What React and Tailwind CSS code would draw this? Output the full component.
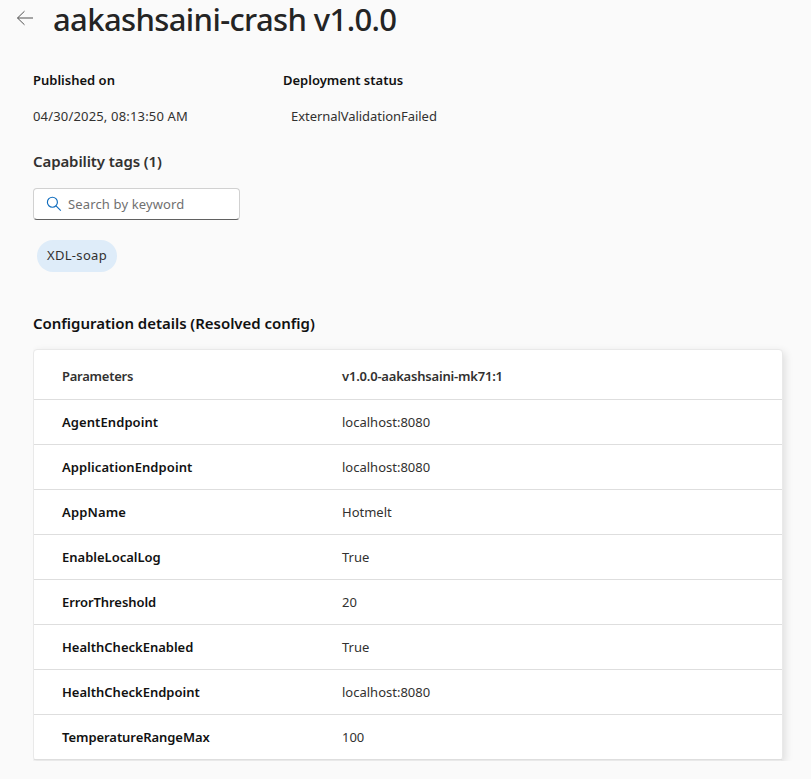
const rows = [
  ["AgentEndpoint", "localhost:8080", "tracking-[0.08px]"],
  ["ApplicationEndpoint", "localhost:8080", "tracking-[0.08px]"],
  ["AppName", "Hotmelt", "tracking-[0.15px]"],
  ["EnableLocalLog", "True", "tracking-normal"],
  ["ErrorThreshold", "20", "tracking-[-0.08px]"],
  ["HealthCheckEnabled", "True", "tracking-normal"],
  ["HealthCheckEndpoint", "localhost:8080", "tracking-normal"],
  ["TemperatureRangeMax", "100", "tracking-[-0.06px]"],
];

function BackArrow() {
  return (
    <svg width="18" height="16" viewBox="0 0 18 16" fill="none" stroke="#505050" strokeWidth="1">
      <path d="M8.5 1.2 L1.5 8 L8.5 14.8 M1.5 8 H17" />
    </svg>
  );
}

function SearchIcon() {
  return (
    <svg width="16" height="16" viewBox="0 0 16 16" fill="none" stroke="#0f6cbd" strokeWidth="1.15">
      <circle cx="6.4" cy="6.2" r="5" />
      <path d="M10 9.9 L14.8 14.7" />
    </svg>
  );
}

export default function App() {
  return (
    <main className="h-[779px] w-[811px] bg-[#fafafa] font-['Noto_Sans','Open_Sans',sans-serif] text-[13px] leading-5 text-[#323130]">
      <header className="flex h-10 items-start pl-4">
        <button className="mt-[10px] w-[37px]" aria-label="Back">
          <BackArrow />
        </button>
        <h1 className="text-[31px] leading-[38px] font-medium tracking-[-0.62px] whitespace-nowrap text-[#242424]">
          aakashsaini-crash v1.0.0
        </h1>
      </header>

      <section className="flex pt-[30px] pl-[33px]">
        <div className="w-[250px]">
          <h2 className="font-semibold text-[#111]">Published on</h2>
          <p className="mt-4 tracking-[0.17px]">04/30/2025, 08:13:50 AM</p>
        </div>
        <div>
          <h2 className="font-semibold text-[#111]">Deployment status</h2>
          <p className="mt-4 pl-2 tracking-[-0.05px]">ExternalValidationFailed</p>
        </div>
      </section>

      <section className="pt-[25px] pl-[33px]">
        <h2 className="text-[15px] leading-5 font-semibold tracking-[-0.1px]">Capability tags (1)</h2>
        <label className="mt-[17px] flex h-8 w-[207px] items-center gap-[6px] rounded border border-[#d1d1d1] border-b-[#616161] bg-white pl-3">
          <SearchIcon />
          <span className="tracking-[0.14px] text-[#707070]">Search by keyword</span>
        </label>
        <div className="mt-5 ml-1 flex h-8 w-20 items-center justify-center rounded-full bg-[#deecf9] pb-[2px]">
          <span className="tracking-[0.3px]">XDL-soap</span>
        </div>
      </section>

      <section className="pt-[41px]">
        <h2 className="pl-[33px] text-[15px] leading-5 font-semibold tracking-[-0.03px] text-[#111]">
          Configuration details (Resolved config)
        </h2>
        <div className="mt-[7px] ml-[33px] h-[421px] overflow-hidden pt-[9px]">
          <div className="w-[750px] rounded border border-[#e9e9e9] bg-white shadow-[2px_3px_8px_rgba(0,0,0,0.12)]">
            <div className="flex h-[50px] items-center border-b border-[#dedede] pt-[3px] pl-7 font-semibold">
              <div className="w-[280px] tracking-[-0.25px]">Parameters</div>
              <div className="tracking-[-0.2px]">v1.0.0-aakashsaini-mk71:1</div>
            </div>
            {rows.map(([name, value, tracking]) => (
              <div key={name} className="flex h-[45px] items-center border-b border-[#dedede] pl-7">
                <div className={`w-[280px] font-semibold text-[#111] ${tracking}`}>{name}</div>
                <div>{value}</div>
              </div>
            ))}
          </div>
        </div>
      </section>
    </main>
  );
}
